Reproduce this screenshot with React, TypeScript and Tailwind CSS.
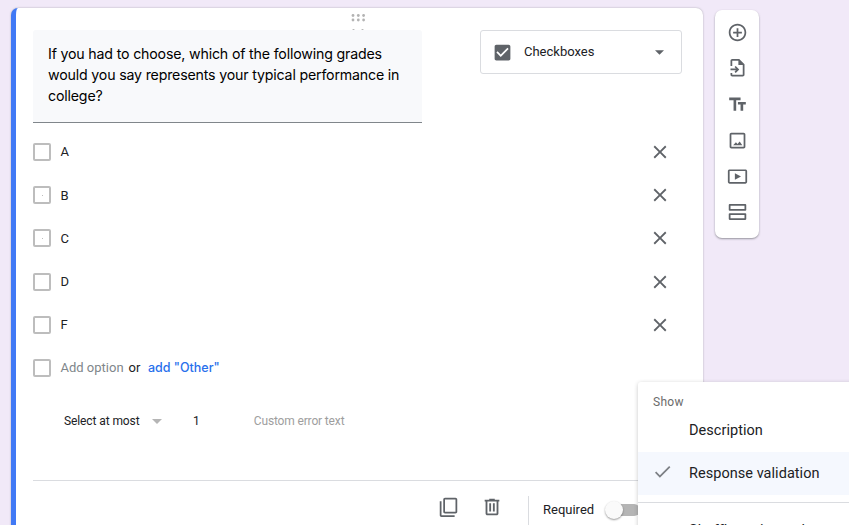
import React from "react";

type IconProps = { d: string; className?: string };

function Icon({ d, className = "" }: IconProps) {
  return (
    <svg viewBox="0 0 24 24" preserveAspectRatio="none" className={`shrink-0 fill-[#5f6368] ${className}`}>
      <path fillRule="evenodd" d={d} />
    </svg>
  );
}

const CLOSE =
  "M19 6.41L17.59 5 12 10.59 6.41 5 5 6.41 10.59 12 5 17.59 6.41 19 12 13.41 17.59 19 19 17.59 13.41 12z";
const ADD =
  "M13 7h-2v4H7v2h4v4h2v-4h4v-2h-4V7zm-1-5C6.48 2 2 6.48 2 12s4.480 10 10 10 10-4.480 10-10S17.520 2 12 2zm0 18c-4.410 0-8-3.590-8-8s3.590-8 8-8 8 3.590 8 8-3.590 8-8 8z";
const IMPORT =
  "M14 1H6c-1.100 0-2 .900-2 2v6h2V3h7v5h5v11H6v-2H4v2c0 1.100.900 2 2 2h12c1.100 0 2-.900 2-2V7l-6-6zM4 12v2h6.200l-1.600 1.600L10 17l4-4-4-4-1.400 1.400L10.200 12H4z";
const TEXT = "M2.500 4v3h5v12h3V7h5V4h-13zm19 5h-9v3h3v7h3v-7h3V9z";
const IMAGE =
  "M19 5v14H5V5h14m0-2H5c-1.100 0-2 .900-2 2v14c0 1.100.900 2 2 2h14c1.100 0 2-.900 2-2V5c0-1.100-.900-2-2-2zM14.500 13l-2.500 3-1.800-2.100L7 17.300h10.500L14.500 13z";
const VIDEO =
  "M9 8v8l7-4-7-4zm12-5H3c-1.100 0-2 .900-2 2v14c0 1.100.900 2 2 2h18c1.100 0 2-.900 2-2V5c0-1.100-.900-2-2-2zm0 16H3V5h18v14z";
const SECTION =
  "M20 4.500v4H4v-4h16m1-2H3c-.550 0-1 .450-1 1v6c0 .550.450 1 1 1h18c.550 0 1-.450 1-1v-6c0-.550-.450-1-1-1zm-1 13v4H4v-4h16m1-2H3c-.550 0-1 .450-1 1v6c0 .550.450 1 1 1h18c.550 0 1-.450 1-1v-6c0-.550-.450-1-1-1z";
const COPY =
  "M20 2H8c-1.100 0-2 .900-2 2v14c0 1.100.900 2 2 2h12c1.100 0 2-.900 2-2V4c0-1.100-.900-2-2-2zm0 16H8V4h12v14zM4 6H2v16c0 1.100.900 2 2 2h15v-2H4V6z";
const TRASH =
  "M15 4V3H9v1H4v2h1v13c0 1.100.900 2 2 2h10c1.100 0 2-.900 2-2V6h1V4h-5zm2 15H7V6h10v13zM9 8h2v9H9V8zm4 0h2v9h-2V8z";
const CHECK = "M9 16.170L4.830 12l-1.420 1.410L9 19 21 7l-1.410-1.410z";

function Box({ dot = false }: { dot?: boolean }) {
  return (
    <span className="flex size-[18px] shrink-0 items-center justify-center rounded-[2px] border-2 border-[#bdbdbd]">
      {dot && <span className="size-px bg-[#bdbdbd]" />}
    </span>
  );
}

function Option({ label, dot }: { label: string; dot?: boolean }) {
  return (
    <li className="flex h-[43.2px] items-center">
      <Box dot={dot} />
      <span className="ml-[9.5px] text-[13px]">{label}</span>
      <Icon d={CLOSE} className="mr-[11px] ml-auto size-[22px]" />
    </li>
  );
}

function Toolbar() {
  return (
    <aside className="mt-[10px] ml-[12.4px] flex h-[228px] w-[44px] flex-col items-center rounded-[7px] bg-white pt-[4px] shadow-[0_1px_2px_rgba(60,64,67,0.5)]">
      {[
        { d: ADD, size: "size-[21px]" },
        { d: IMPORT, size: "size-[21px]" },
        { d: TEXT, size: "size-[21px]" },
        { d: IMAGE, size: "size-[21px]" },
        { d: VIDEO, size: "h-[19px] w-[21px]" },
        { d: SECTION, size: "h-[20px] w-[21px]" },
      ].map(({ d, size }, i) => (
        <button key={i} className="flex h-[36px] w-full items-center justify-center">
          <Icon d={d} className={size} />
        </button>
      ))}
    </aside>
  );
}

function Menu() {
  return (
    <div className="absolute top-[382px] left-[638px] h-[160px] w-[230px] rounded-[3px] bg-white shadow-[0_1px_4px_rgba(0,0,0,0.22)]">
      <div className="flex h-[27px] items-end pl-[15px] text-[12px] leading-[14px] tracking-[0.3px] text-[#6b6b6b]">
        Show
      </div>
      <div className="flex h-[43px] items-center pl-[51px] text-[14.5px] tracking-[0.04px]">
        Description
      </div>
      <div className="flex h-[43px] items-center bg-[#f5f8fe] pl-[14px] text-[14.5px] tracking-[0.04px]">
        <Icon d={CHECK} className="mr-[16px] size-[21px] -translate-y-0.5 opacity-80" />
        Response validation
      </div>
      <div className="mt-[7px] border-t border-[#dadce0]" />
      <div className="mt-[19px] pl-[51px] text-[14.5px] leading-[18px] tracking-[0.04px]">
        Shuffle option order
      </div>
    </div>
  );
}

export default function App() {
  return (
    <div className="relative flex h-[525px] w-[849px] items-start overflow-hidden bg-[#f1e9f8] font-['Roboto',sans-serif] text-[#202124]">
      <main className="mt-[8px] ml-[11px] flex h-[540px] w-[692px] shrink-0 flex-col rounded-[7px] border-l-[5px] border-[#4179f5] bg-white pr-[21px] pl-[17px] shadow-[0_0_2px_rgba(60,64,67,0.4)]">
        <div className="flex h-[22px] flex-col items-center overflow-hidden pt-[5px]">
          <svg className="h-[17px] w-[14px] shrink-0 fill-[#b3b3b3]" viewBox="0 0 14 17">
            {[2, 7.3, 12.6].map((x) => (
              <g key={x}>
                <circle cx={x} cy="2.500" r="1.400" />
                <circle cx={x} cy="7" r="1.400" />
              </g>
            ))}
            <circle cx="2.500" cy="17.300" r="1.200" />
            <circle cx="11.500" cy="17.300" r="1.200" />
          </svg>
        </div>
        <div className="flex items-start justify-between">
          <div className="h-[93px] w-[389px] rounded-t-[3px] border-b border-[#80868b] bg-[#f8f9fb] pt-[13px] pl-[15px] font-['Inter','Roboto',sans-serif] text-[14.2px] leading-[21px] tracking-[-0.18px] text-black">
            <p className="whitespace-nowrap">If you had to choose, which of the following grades</p>
            <p className="whitespace-nowrap">would you say represents your typical performance in</p>
            <p>college?</p>
          </div>
          <div className="flex h-[44px] w-[202px] items-center rounded-[3px] border border-[#dadce0] pl-[11px]">
            <Icon
              className="size-[21px]"
              d="M19 3H5c-1.110 0-2 .900-2 2v14c0 1.100.890 2 2 2h14c1.110 0 2-.900 2-2V5c0-1.100-.890-2-2-2zm-9 14l-5-5 1.410-1.410L10 14.170l7.590-7.590L19 8l-9 9z"
            />
            <span className="ml-[11px] text-[13px]">Checkboxes</span>
            <svg viewBox="0 0 10 5" className="mr-[17px] ml-auto h-[5px] w-[9px] fill-[#5f6368]">
              <path d="M0 0h10L5 5z" />
            </svg>
          </div>
        </div>
        <ul className="mt-[7.5px]">
          <Option label="A" />
          <Option label="B" dot />
          <Option label="C" dot />
          <Option label="D" />
          <Option label="F" />
          <li className="flex h-[43.2px] items-center text-[13px]">
            <Box />
            <span className="ml-[9.5px] text-[#80868b]">Add option</span>
            <span className="ml-[5px]">or</span>
            <a className="ml-[7.5px] font-['Inter','Roboto',sans-serif] text-[12.5px] font-medium text-[#2870ec]">add "Other"</a>
          </li>
        </ul>
        <div className="mt-[10.5px] flex h-[42px] items-center pl-[31px] text-[12px]">
          <span className="w-[76px] tracking-[-0.1px] whitespace-nowrap">Select at most</span>
          <svg viewBox="0 0 10 5" className="ml-[12px] h-[5px] w-[10px] fill-[#b5b5b5]">
            <path d="M0 0h10L5 5z" />
          </svg>
          <span className="ml-[31px]">1</span>
          <span className="ml-[54px] tracking-[-0.15px] text-[#9e9e9e]">Custom error text</span>
        </div>
        <div className="mt-[38px] flex h-[60px] items-start border-t border-[#dadce0] pl-[405px]">
          <Icon d={COPY} className="mt-[15px] size-[21px]" />
          <Icon d={TRASH} className="mt-[15px] ml-[22px] size-[22px]" />
          <span className="mt-[15px] ml-[25px] h-[32px] w-px bg-[#dadce0]" />
          <span className="mt-[21px] ml-[14px] text-[13px] leading-[16px]">Required</span>
          <span className="mt-[23px] ml-[14px] flex h-[12px] w-[32px] shrink-0 items-center rounded-full bg-[#b5b5b5]">
            <span className="-ml-[3px] size-[18px] rounded-full bg-[#fafafa] shadow-[0_1px_2px_rgba(0,0,0,0.4)]" />
          </span>
        </div>
      </main>
      <Toolbar />
      <Menu />
    </div>
  );
}
